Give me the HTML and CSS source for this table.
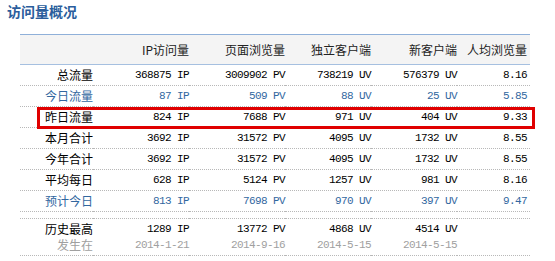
FILE: index.html
```
<!DOCTYPE html>
<html lang="zh-CN">
<head>
    <meta charset="UTF-8">
    <title>访问量概况</title>
    <link rel="stylesheet" href="styles.css">
</head>
<body>

    <h3 class="title">访问量概况</h3>

    <div class="panel">
        <table class="stats">
            <thead>
                <tr>
                    <th class="label"></th>
                    <th>IP访问量</th>
                    <th>页面浏览量</th>
                    <th>独立客户端</th>
                    <th>新客户端</th>
                    <th class="last">人均浏览量</th>
                </tr>
            </thead>
            <tbody>
                <tr>
                    <td class="label">总流量</td>
                    <td class="num">368875 IP</td>
                    <td class="num">3009902 PV</td>
                    <td class="num">738219 UV</td>
                    <td class="num">576379 UV</td>
                    <td class="num last">8.16</td>
                </tr>
                <tr class="blue">
                    <td class="label">今日流量</td>
                    <td class="num">87 IP</td>
                    <td class="num">509 PV</td>
                    <td class="num">88 UV</td>
                    <td class="num">25 UV</td>
                    <td class="num last">5.85</td>
                </tr>
                <tr>
                    <td class="label">昨日流量</td>
                    <td class="num">824 IP</td>
                    <td class="num">7688 PV</td>
                    <td class="num">971 UV</td>
                    <td class="num">404 UV</td>
                    <td class="num last">9.33</td>
                </tr>
                <tr>
                    <td class="label">本月合计</td>
                    <td class="num">3692 IP</td>
                    <td class="num">31572 PV</td>
                    <td class="num">4095 UV</td>
                    <td class="num">1732 UV</td>
                    <td class="num last">8.55</td>
                </tr>
                <tr>
                    <td class="label">今年合计</td>
                    <td class="num">3692 IP</td>
                    <td class="num">31572 PV</td>
                    <td class="num">4095 UV</td>
                    <td class="num">1732 UV</td>
                    <td class="num last">8.55</td>
                </tr>
                <tr>
                    <td class="label">平均每日</td>
                    <td class="num">628 IP</td>
                    <td class="num">5124 PV</td>
                    <td class="num">1257 UV</td>
                    <td class="num">981 UV</td>
                    <td class="num last">8.16</td>
                </tr>
                <tr class="blue">
                    <td class="label">预计今日</td>
                    <td class="num">813 IP</td>
                    <td class="num">7698 PV</td>
                    <td class="num">970 UV</td>
                    <td class="num">397 UV</td>
                    <td class="num last">9.47</td>
                </tr>
                <tr class="spacer">
                    <td colspan="6"></td>
                </tr>
                <tr class="peak">
                    <td class="label">历史最高<br><span class="date">发生在</span></td>
                    <td class="num">1289 IP<br><span class="date">2014-1-21</span></td>
                    <td class="num">13772 PV<br><span class="date">2014-9-16</span></td>
                    <td class="num">4868 UV<br><span class="date">2014-5-15</span></td>
                    <td class="num">4514 UV<br><span class="date">2014-5-15</span></td>
                    <td class="num last"></td>
                </tr>
            </tbody>
        </table>

        <!-- 昨日流量 高亮框 -->
        <div class="highlight"></div>
    </div>

</body>
</html>
```

FILE: styles.css
```
body {
    margin: 0;
    padding: 3px 7px;
    background: #fff;
    color: #000;
    font-family: "Noto Sans CJK SC", "Liberation Sans", sans-serif;
    font-size: 12px;
}

.title {
    margin: 0;
    font-size: 14px;
    line-height: 16px;
    font-weight: bold;
    color: #2a5d9c;
}

.panel {
    position: relative;
    margin: 15px 0 0 13px;
    width: 510px;
}

.stats {
    width: 510px;
    border-collapse: collapse;
    table-layout: fixed;
}

.stats th {
    height: 29px;
    padding: 0;
    background: #f4f4f4;
    border-top: 1px solid #8fb0d9;
    border-bottom: 1px solid #a6c0e0;
    font-weight: normal;
    color: #222;
    text-align: right;
}

.stats th:nth-child(1), .stats td:nth-child(1) { width: 73px; }
.stats th:nth-child(2), .stats td:nth-child(2) { width: 96px; }
.stats th:nth-child(3), .stats td:nth-child(3) { width: 96px; }
.stats th:nth-child(4), .stats td:nth-child(4) { width: 86px; }
.stats th:nth-child(5), .stats td:nth-child(5) { width: 86px; }

.stats td {
    height: 20px;
    padding: 0;
    line-height: 20px;
    border-bottom: 1px dotted #b8b8b8;
    text-align: right;
    white-space: nowrap;
}

.stats .last { padding-right: 3px; }

.num {
    font-family: "Liberation Mono", "DejaVu Sans Mono", monospace;
    font-size: 11px;
    letter-spacing: -0.6px;
}

.label { font-size: 12px; }

.blue td { color: #32679f; }

.spacer td { height: 6px; line-height: 6px; }

.peak td {
    height: auto;
    line-height: 16px;
    padding: 2px 0 2px 0;
}

.peak .last { padding-right: 3px; }

.date { color: #a0a0a0; }

.highlight {
    position: absolute;
    left: 17px;
    top: 73px;
    width: 492px;
    height: 16px;
    border: 3px solid #e00000;
}
```
